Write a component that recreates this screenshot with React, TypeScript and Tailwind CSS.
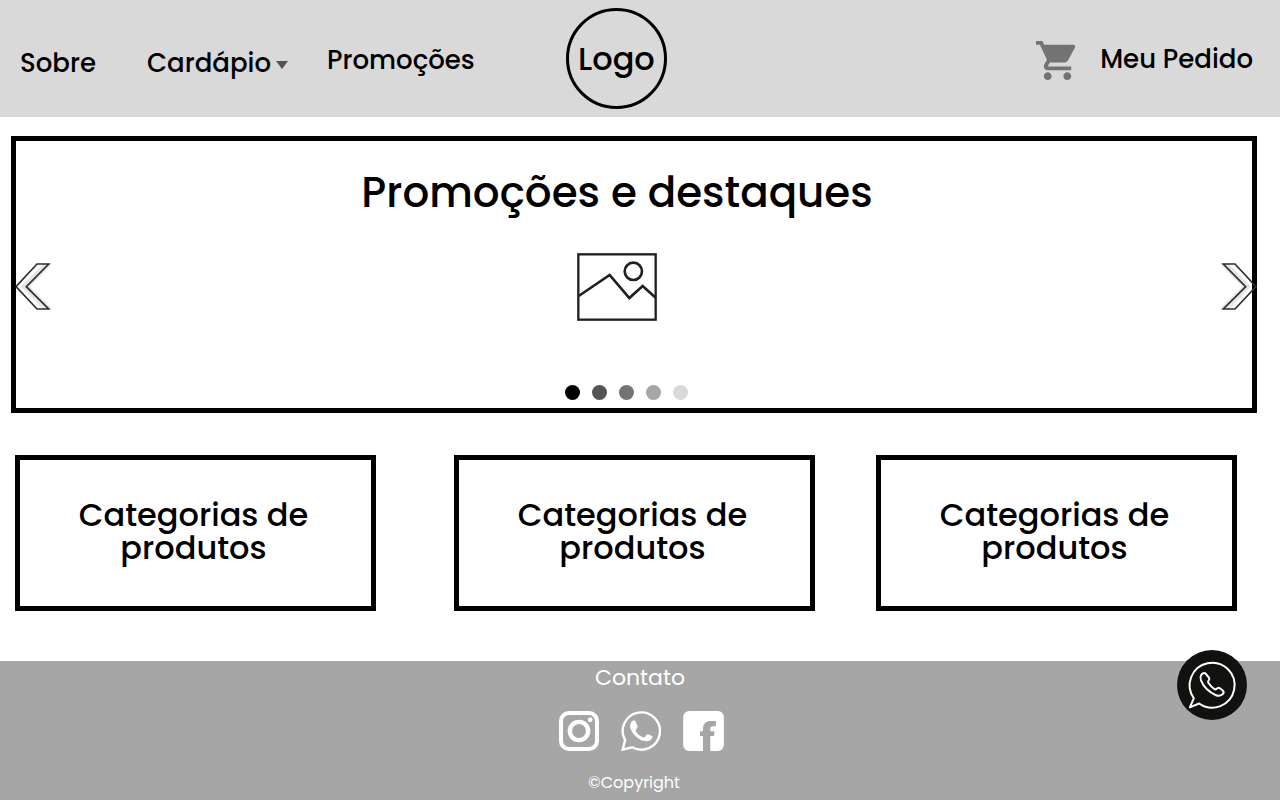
import { MdShoppingCart } from "react-icons/md";

const dots = ["bg-black", "bg-[#545454]", "bg-[#737373]", "bg-[#a6a6a6]", "bg-[#d9d9d9]"];

function Chevron({ flipped = false }: { flipped?: boolean }) {
  return (
    <svg viewBox="0 0 114 141" className={flipped ? "h-[47px] w-[38px] -scale-x-100" : "h-[47px] w-[38px]"} fill="none" aria-hidden="true">
      <path d="M84 3H112L44 71L112 138H84L18 71Z" fill="#e3e8e4" />
      <path d="M66 3H101L34 71L101 138H66L3 71Z" stroke="#2e2e2e" strokeWidth="5" />
    </svg>
  );
}

function PictureIcon() {
  return (
    <svg viewBox="0 0 240 204" className="h-[68px] w-20" fill="none" stroke="#231f20" strokeWidth="7" aria-hidden="true">
      <rect x="4" y="4" width="232" height="196" />
      <path d="M5 129L98 66L157 135L197 99L236 134" strokeWidth="8" />
      <circle cx="169" cy="55" r="26" strokeWidth="8" />
    </svg>
  );
}

function InstagramIcon() {
  return (
    <svg viewBox="0 0 118 118" className="size-10" fill="none" stroke="#fff" aria-hidden="true">
      <rect x="6" y="6" width="106" height="106" rx="23" strokeWidth="12" />
      <circle cx="59" cy="59" r="27" strokeWidth="13" />
      <circle cx="92" cy="26" r="7" fill="#fff" stroke="none" />
    </svg>
  );
}

function WhatsappIcon() {
  return (
    <svg viewBox="0 0 118 118" className="size-10" fill="none" aria-hidden="true">
      <path d="M5 114L12 86A55 55 0 1 1 33 107Z" stroke="#fff" strokeWidth="7" />
      <path
        d="M28 38C30 32 34 27 38 28C42 28 43 30 44 33L49 45C50 48 46 52 44 55C42 57 43 58 45 61C50 69 57 75 66 78C69 79 70 78 72 75L76 70C78 68 80 68 82 69L92 74C94 75 92 82 88 85C84 89 76 91 66 88C50 83 38 71 31 58C26 50 26 43 28 38Z"
        fill="#fff"
      />
    </svg>
  );
}

function FacebookIcon() {
  return (
    <svg viewBox="0 0 123 121" className="h-10 w-[41px]" aria-hidden="true">
      <rect width="123" height="121" rx="18" fill="#fff" />
      <path d="M60 121V76H51V61H60V52C60 38 70 30 84 30H99V46H90C84 46 82 49 82 54V61H95L93 76H82V121Z" fill="#a6a6a6" />
    </svg>
  );
}

function ChatIcon() {
  return (
    <svg viewBox="0 0 212 212" className="size-full" fill="none" stroke="#fff" strokeWidth="6" strokeLinejoin="round" aria-hidden="true">
      <path d="M39 174L51 146A68 68 0 1 1 67 162Z" />
      <path d="M73 76C77 71 83 68 86 71L97 84C99 87 98 90 96 92C93 95 94 98 96 101C101 109 107 114 113 118C116 120 119 119 121 117C124 114 127 114 130 116L139 123C143 127 141 131 138 134C132 139 125 140 118 137C98 128 81 113 73 93C71 87 70 81 73 76Z" />
    </svg>
  );
}

function Category({ className = "" }: { className?: string }) {
  return (
    <a
      href="#categoria"
      className={`flex h-[156px] flex-1 items-center justify-center border-[5px] border-black pr-1 pb-1 text-center text-[32px] leading-[33px] font-medium ${className}`}
    >
      <span>
        Categorias de
        <br />
        produtos
      </span>
    </a>
  );
}

export default function App() {
  return (
    <div className="flex min-h-screen flex-col bg-white font-['Poppins','Inter',sans-serif] text-black">
      <header className="grid h-[117px] grid-cols-[12fr_101px_13fr] items-center bg-[#d9d9d9] text-[26px] leading-8 font-medium">
        <nav className="grid grid-cols-[127px_180px_auto] pt-[5px] pl-5">
          <a href="#sobre" className="pt-[3px]">Sobre</a>
          <button type="button" className="flex items-center gap-[5px] pt-[3px] text-left">
            Cardápio
            <svg viewBox="0 0 12 8" className="mt-1 h-2 w-3" aria-hidden="true">
              <path d="M0 0H12L6 8Z" fill="#545454" />
            </svg>
          </button>
          <a href="#promocoes">Promoções</a>
        </nav>
        <a href="#inicio" className="flex size-[101px] items-center justify-center rounded-full border-3 border-black text-[32px]">
          Logo
        </a>
        <a href="#pedido" className="flex items-center gap-[19px] justify-self-end pt-1 pr-[27px]">
          <MdShoppingCart className="size-[47px] text-[#737373]" />
          <span className="pb-1">Meu Pedido</span>
        </a>
      </header>

      <main>
        <section className="relative mt-[19px] mr-[23px] ml-[11px] h-[277px] border-[5px] border-black">
          <div className="flex flex-col items-center pt-[27px] pr-[34px]">
            <h1 className="text-[42px] leading-[50px] font-medium">Promoções e destaques</h1>
            <div className="mt-[35px]">
              <PictureIcon />
            </div>
          </div>
          <div className="mt-16 flex justify-center gap-3 pr-4">
            {dots.map((color, i) => (
              <button key={color} type="button" aria-label={`Destaque ${i + 1}`} className={`size-[15px] rounded-full ${color}`} />
            ))}
          </div>
          <button type="button" aria-label="Anterior" className="absolute top-[122px] -left-px">
            <Chevron />
          </button>
          <button type="button" aria-label="Próximo" className="absolute top-[122px] -right-[5px]">
            <Chevron flipped />
          </button>
        </section>

        <section className="mt-[42px] mr-[43px] ml-[15px] flex gap-[61px]">
          <Category className="mr-[17px]" />
          <Category />
          <Category />
        </section>
      </main>

      <footer className="relative mt-[50px] flex flex-1 flex-col items-center bg-[#a6a6a6] pb-1 text-white">
        <h2 className="mt-[5px] text-[22px] leading-6">Contato</h2>
        <div className="mt-[21px] flex items-center gap-[22px] pl-[2px]">
          <a href="#instagram" aria-label="Instagram"><InstagramIcon /></a>
          <a href="#whatsapp" aria-label="WhatsApp"><WhatsappIcon /></a>
          <a href="#facebook" aria-label="Facebook"><FacebookIcon /></a>
        </div>
        <p className="mt-5 pr-3 text-base leading-6">©Copyright</p>
        <a href="#conversa" aria-label="Conversar pelo WhatsApp" className="absolute -top-[11px] right-[33px] size-[70px] rounded-full bg-[#11110f]">
          <ChatIcon />
        </a>
      </footer>
    </div>
  );
}
